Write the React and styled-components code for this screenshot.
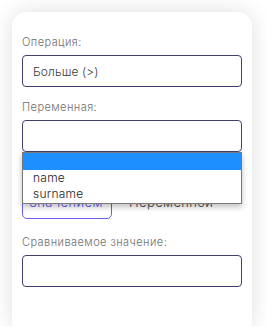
import React from "react";
import styled, { createGlobalStyle } from "styled-components";

const Global = createGlobalStyle`
  html, body { margin: 0; padding: 0; background: #ffffff; }
  body { font-family: Inter, "Noto Sans", sans-serif; overflow: hidden; }
`;

const Page = styled.div`
  padding: 12px 15px 0 12px;
  width: 267px;
  height: 327px;
  box-sizing: border-box;
  overflow: hidden;
`;

const Card = styled.div`
  background: #fff;
  border-radius: 14px 14px 0 0;
  box-shadow: 0 0 22px rgba(0, 0, 0, 0.13);
  padding: 23px 10px 0 10px;
  height: 315px;
  box-sizing: border-box;
  display: flex;
  flex-direction: column;
`;

const Field = styled.div`
  display: flex;
  flex-direction: column;
  margin-bottom: ${(p) => p.$mb ?? 13}px;
  position: relative;
`;

const Label = styled.label`
  font-size: 11px;
  line-height: 14px;
  font-weight: 300;
  color: #6f6f6f;
  letter-spacing: 0.04em;
  margin-bottom: 6px;
`;

const Input = styled.div`
  height: 32px;
  box-sizing: border-box;
  border: 1px solid #3f3f70;
  border-radius: 4px;
  padding: 0 10px;
  display: flex;
  align-items: center;
  font-size: 12px;
  font-weight: 300;
  color: #3a3a3a;
  letter-spacing: 0.01em;
`;

const Toggle = styled.div`
  display: flex;
  align-items: center;
  gap: 10px;
  margin-top: 33px;
`;

const ToggleBtn = styled.div`
  height: 34px;
  box-sizing: border-box;
  padding: 0 6px;
  width: ${(p) => (p.$active ? "90px" : "auto")};
  border: 1px solid ${(p) => (p.$active ? "#6b5ff2" : "transparent")};
  border-radius: 5px;
  color: ${(p) => (p.$active ? "#5d52ee" : "#444")};
  font-size: 13px;
  font-weight: 300;
  letter-spacing: 0.03em;
  display: flex;
  align-items: center;
`;

const Dropdown = styled.div`
  position: absolute;
  left: 0;
  right: 0;
  top: 52px;
  background: #fff;
  border: 1px solid #7a7a7a;
  box-shadow: 0 3px 6px rgba(0, 0, 0, 0.25);
  z-index: 5;
  padding-bottom: 1px;
`;

const Option = styled.div`
  height: ${(p) => (p.$blank ? 17 : 16)}px;
  line-height: 16px;
  padding: 0 10px;
  font-size: 12px;
  font-weight: 300;
  color: #222;
  letter-spacing: 0.02em;
  background: ${(p) => (p.$selected ? "#1e8fff" : "#fff")};
`;

export default function App() {
  return (
    <>
      <Global />
      <Page>
        <Card>
          <Field>
            <Label>Операция:</Label>
            <Input>Больше (&gt;)</Input>
          </Field>
          <Field $mb={0}>
            <Label>Переменная:</Label>
            <Input />
            <Dropdown>
              <Option $selected $blank />
              <Option>name</Option>
              <Option>surname</Option>
            </Dropdown>
          </Field>
          <Field $mb={16}>
            <Toggle>
              <ToggleBtn $active>Значением</ToggleBtn>
              <ToggleBtn>Переменной</ToggleBtn>
            </Toggle>
          </Field>
          <Field>
            <Label>Сравниваемое значение:</Label>
            <Input />
          </Field>
        </Card>
      </Page>
    </>
  );
}
